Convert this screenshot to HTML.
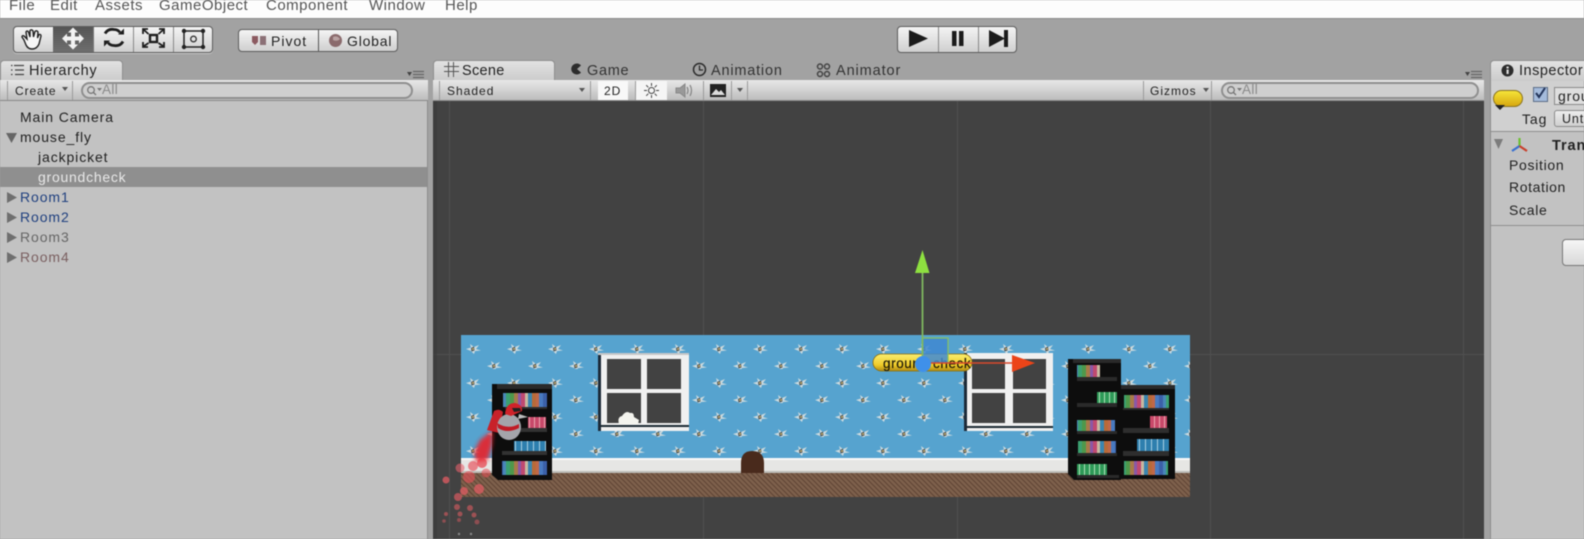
<!DOCTYPE html>
<html style="background:#a2a2a2"><head><meta charset="utf-8"><title>Unity Editor</title>
<style>
html,body{margin:0;padding:0}
html{overflow:hidden}
body{width:1584px;height:539px;overflow:hidden;background:#a2a2a2;position:relative;font-family:"Liberation Sans",sans-serif;color:#222;filter:blur(.45px)}
.a{position:absolute}
.t{position:absolute;white-space:nowrap;font-size:14px;letter-spacing:.9px;line-height:18px}
.m{font-size:15px;letter-spacing:.5px;color:#555;top:-3px}
.btn{position:absolute;background:linear-gradient(#f4f4f4,#cfcfcf);border:1px solid #5c5c5c;box-sizing:border-box}
.bar{position:absolute;background:linear-gradient(#e8e8e8,#bdbdbd);border-bottom:1px solid #8a8a8a;box-sizing:border-box}
.tab{position:absolute;background:linear-gradient(#e2e2e2,#cbcbcb);border-radius:4px 4px 0 0;border:1px solid #8e8e8e;border-bottom:0;box-sizing:border-box}
.search{position:absolute;background:#cfcfcf;border:2px solid #8f8f8f;border-radius:9px;box-sizing:border-box}
.sep{position:absolute;width:1px;background:#9a9a9a}
</style></head><body>

<!-- menu -->
<div class="a" style="left:0;top:0;width:1584px;height:18px;background:#fdfdfd"></div>
<div class="t m" style="left:9px">File</div>
<div class="t m" style="left:50px">Edit</div>
<div class="t m" style="left:95px">Assets</div>
<div class="t m" style="left:159px">GameObject</div>
<div class="t m" style="left:266px">Component</div>
<div class="t m" style="left:369px">Window</div>
<div class="t m" style="left:445px">Help</div>
<div class="a" style="left:0;top:18px;width:1584px;height:1px;background:#8c8c8c"></div>

<!-- tools -->
<div class="btn" style="left:13px;top:26px;width:200px;height:27px;border-radius:4px;box-shadow:0 1px 0 #c8c8c8"></div>
<div class="a" style="left:53px;top:27px;width:40px;height:25px;background:linear-gradient(#555,#6e6e6e)"></div>
<div class="sep" style="left:93px;top:27px;height:25px;background:#777"></div>
<div class="sep" style="left:133px;top:27px;height:25px;background:#888"></div>
<div class="sep" style="left:173px;top:27px;height:25px;background:#888"></div>
<svg class="a" style="left:13px;top:26px" width="200" height="27" viewBox="0 0 200 27">
 <path d="M11 14 L9 11 Q9 9 11 10 L14 13 L13 6 Q14 4 15.500 6 L17 11 L17 4.500 Q18.500 3 20 5 L20.500 11 L22 5.500 Q23.500 4 25 6 L24.500 12 L26 8.500 Q28 8 28 10 L26 18 Q24 23 19 23 Q15 23 13 19 Z" fill="#f6f6f6" stroke="#222" stroke-width="1.400"/>
 <path transform="translate(1,-1.500)" d="M59 3 L64 8 L61 8 L61 12 L65 12 L65 9 L70 14 L65 19 L65 16 L61 16 L61 20 L64 20 L59 25 L54 20 L57 20 L57 16 L53 16 L53 19 L48 14 L53 9 L53 12 L57 12 L57 8 L54 8 Z" fill="#f2f2f2"/>
 <g transform="translate(1,-2.500)">
  <path d="M91 10 Q94 5 100 6 Q104 6 106 9 M109 18 Q106 23 100 22 Q96 22 94 19" fill="none" stroke="#1e1e1e" stroke-width="2.800"/>
  <path d="M104 11 L110 11 L110 5 Z M96 17 L90 17 L90 23 Z" fill="#1e1e1e"/>
 </g>
 <rect x="137" y="9" width="7" height="7" fill="none" stroke="#1e1e1e" stroke-width="2.400"/>
 <path d="M135 3 H130 V8 M146 3 H151 V8 M135 21 H130 V16 M146 21 H151 V16 M131 4 L135.500 8 M150 4 L145.500 8 M131 20 L135.500 17 M150 20 L145.500 17" fill="none" stroke="#1e1e1e" stroke-width="1.800"/>
 <rect x="171" y="5" width="19" height="16" fill="none" stroke="#222" stroke-width="1.500"/>
 <circle cx="171" cy="5" r="2.200" fill="#222"/><circle cx="190" cy="5" r="2.200" fill="#222"/><circle cx="171" cy="21" r="2.200" fill="#222"/><circle cx="190" cy="21" r="2.200" fill="#222"/>
 <circle cx="180.500" cy="13" r="2.800" fill="none" stroke="#333" stroke-width="1.300"/>
</svg>

<!-- pivot / global -->
<div class="btn" style="left:238px;top:29px;width:160px;height:23px;border-radius:4px"></div>
<div class="sep" style="left:318px;top:30px;height:21px;background:#555"></div>
<svg class="a" style="left:250px;top:34px" width="18" height="13"><path d="M2 2 H8 V8 L5 11 L2 8 Z" fill="#8b5a60"/><rect x="10" y="2" width="6" height="9" fill="#8b7076"/></svg>
<div class="t" style="left:271px;top:32px;letter-spacing:1px">Pivot</div>
<svg class="a" style="left:328px;top:33px" width="15" height="15"><circle cx="7.500" cy="7.500" r="6.500" fill="#8a6a6c"/><path d="M5 4 Q9 2 12 6 Q9 9 5 7 Z" fill="#b9a2a2"/></svg>
<div class="t" style="left:347px;top:32px;letter-spacing:.8px">Global</div>

<!-- play -->
<div class="btn" style="left:897px;top:26px;width:120px;height:27px;border-radius:4px"></div>
<div class="sep" style="left:938px;top:27px;height:25px;background:#888"></div>
<div class="sep" style="left:978px;top:27px;height:25px;background:#888"></div>
<svg class="a" style="left:897px;top:26px" width="120" height="27">
 <path d="M12 4 L31 12.500 L12 21 Z" fill="#1b1b1b"/>
 <rect x="55" y="5" width="4.500" height="15" fill="#1b1b1b"/><rect x="62" y="5" width="4.500" height="15" fill="#1b1b1b"/>
 <path d="M92 4 L107 12 L107 4 H111 V21 H107 L107 13 L92 21 Z" fill="#1b1b1b"/>
</svg>

<!-- hierarchy -->
<div class="a" style="left:0;top:80px;width:428px;height:459px;background:#c2c2c2;border-right:1px solid #8d8d8d;box-sizing:border-box"></div>
<div class="tab" style="left:0;top:60px;width:123px;height:21px"></div>
<svg class="a" style="left:10px;top:64px" width="15" height="12"><path d="M1 1.500H2.500M1 6H2.500M1 10.500H2.500M4 1.500H14M5 6H14M5 10.500H14" stroke="#444" stroke-width="1.200"/></svg>
<div class="t" style="left:29px;top:62px;font-size:14.5px;letter-spacing:.7px">Hierarchy</div>
<svg class="a" style="left:407px;top:70px" width="18" height="9"><path d="M0 2H5L2.500 6Z" fill="#444"/><path d="M6 1.500H17M6 4.500H17M6 7.500H17" stroke="#666" stroke-width="1.200"/></svg>
<div class="bar" style="left:0;top:80px;width:428px;height:21px"></div>
<div class="sep" style="left:7px;top:81px;height:19px"></div>
<div class="sep" style="left:72px;top:81px;height:19px"></div>
<div class="t" style="left:15px;top:82px;font-size:12px;letter-spacing:.9px">Create</div>
<svg class="a" style="left:62px;top:87px" width="6" height="4"><path d="M0 0H6L3 4Z" fill="#555"/></svg>
<div class="search" style="left:81px;top:82px;width:332px;height:17px"></div>
<svg class="a" style="left:86px;top:85px" width="16" height="11"><circle cx="5" cy="5" r="3.300" fill="none" stroke="#777" stroke-width="1.300"/><path d="M7 7L10 10" stroke="#777" stroke-width="1.300"/><path d="M11 3H16L13.500 6Z" fill="#777"/></svg>
<div class="t" style="left:102px;top:81px;font-size:13.500px;color:#8a8a8a;letter-spacing:.4px">All</div>

<div class="t" style="left:20px;top:108px">Main Camera</div>
<svg class="a" style="left:6px;top:133px" width="11" height="10"><path d="M0 0H11L5.500 10Z" fill="#666"/></svg>
<div class="t" style="left:20px;top:128px">mouse_fly</div>
<div class="t" style="left:38px;top:148px">jackpicket</div>
<div class="a" style="left:0;top:167px;width:427px;height:20px;background:#8f8f8f"></div>
<div class="t" style="left:38px;top:168px;color:#e8e8e8;letter-spacing:.75px">groundcheck</div>
<svg class="a" style="left:7px;top:192px" width="10" height="72"><path d="M0 0L10 5.500L0 11ZM0 20L10 25.500L0 31ZM0 40L10 45.500L0 51ZM0 60L10 65.500L0 71Z" fill="#6e6e6e"/></svg>
<div class="t" style="left:20px;top:188px;color:#20407f">Room1</div>
<div class="t" style="left:20px;top:208px;color:#20407f">Room2</div>
<div class="t" style="left:20px;top:228px;color:#666">Room3</div>
<div class="t" style="left:20px;top:248px;color:#7a5f60">Room4</div>

<!-- scene panel -->
<div class="tab" style="left:433px;top:60px;width:122px;height:21px"></div>
<svg class="a" style="left:444px;top:62px" width="15" height="15"><path d="M4.500 0V15M9.500 0V15M0 4.500H15M0 9.500H15" stroke="#555" stroke-width="1"/></svg>
<div class="t" style="left:462px;top:62px;font-size:14.500px;letter-spacing:.3px">Scene</div>
<svg class="a" style="left:570px;top:63px" width="12" height="12"><path d="M11 2.500A5.500 5.500 0 1 0 11 9.500L7 6Z" fill="#2c2c2c"/></svg>
<div class="t" style="left:587px;top:62px;font-size:14.500px;color:#333;letter-spacing:.7px">Game</div>
<svg class="a" style="left:692px;top:62px" width="15" height="15"><circle cx="7.500" cy="7.500" r="6" fill="none" stroke="#2c2c2c" stroke-width="1.500"/><path d="M7.500 3.500V8H11" fill="none" stroke="#2c2c2c" stroke-width="1.300"/></svg>
<div class="t" style="left:711px;top:62px;font-size:14.500px;color:#333;letter-spacing:.8px">Animation</div>
<svg class="a" style="left:816px;top:63px" width="15" height="15"><g fill="none" stroke="#444" stroke-width="1.500"><circle cx="4" cy="3.500" r="2.500"/><circle cx="11" cy="3.500" r="2.500"/><circle cx="11" cy="11" r="2.500"/><circle cx="4" cy="11" r="2.500"/></g></svg>
<div class="t" style="left:836px;top:62px;font-size:14.500px;color:#333;letter-spacing:.9px">Animator</div>
<svg class="a" style="left:1465px;top:70px" width="18" height="9"><path d="M0 2H5L2.500 6Z" fill="#444"/><path d="M6 1.500H17M6 4.500H17M6 7.500H17" stroke="#666" stroke-width="1.200"/></svg>

<div class="bar" style="left:433px;top:80px;width:1051px;height:21px"></div>
<div class="sep" style="left:439px;top:81px;height:19px"></div>
<div class="t" style="left:447px;top:82px;font-size:12px;letter-spacing:1px">Shaded</div>
<svg class="a" style="left:579px;top:88px" width="6" height="4"><path d="M0 0H6L3 4Z" fill="#555"/></svg>
<div class="sep" style="left:590px;top:81px;height:19px"></div>
<div class="a" style="left:598px;top:81px;width:30px;height:19px;background:#f8f8f8"></div>
<div class="t" style="left:604px;top:82px;font-size:12px;letter-spacing:1px">2D</div>
<div class="sep" style="left:635px;top:81px;height:19px"></div>
<div class="a" style="left:636px;top:81px;width:31px;height:19px;background:#f5f5f5"></div>
<svg class="a" style="left:644px;top:83px" width="15" height="15"><circle cx="7.500" cy="7.500" r="3" fill="none" stroke="#444"/><path d="M7.500 0V3M7.500 12V15M0 7.500H3M12 7.500H15M2.200 2.200L4.300 4.300M10.700 10.700L12.800 12.800M2.200 12.800L4.300 10.700M10.700 4.300L12.800 2.200" stroke="#444"/></svg>
<svg class="a" style="left:675px;top:83px" width="20" height="15"><path d="M1 5H5L10 1V14L5 10H1Z" fill="#999" stroke="#888"/><path d="M12 4Q14 7.500 12 11M15 2Q18 7.500 15 13" fill="none" stroke="#888" stroke-width="1.300"/></svg>
<div class="sep" style="left:703px;top:81px;height:19px"></div>
<svg class="a" style="left:710px;top:84px" width="16" height="13"><rect width="16" height="13" fill="#222"/><path d="M1 11L6 5L9 8L11 6L15 11Z" fill="#ddd"/></svg>
<svg class="a" style="left:737px;top:88px" width="6" height="4"><path d="M0 0H6L3 4Z" fill="#555"/></svg>
<div class="sep" style="left:731px;top:81px;height:19px"></div>
<div class="sep" style="left:747px;top:81px;height:19px"></div>
<div class="sep" style="left:1143px;top:81px;height:19px"></div>
<div class="t" style="left:1150px;top:82px;font-size:12px;letter-spacing:1px">Gizmos</div>
<svg class="a" style="left:1203px;top:88px" width="6" height="4"><path d="M0 0H6L3 4Z" fill="#555"/></svg>
<div class="sep" style="left:1211px;top:81px;height:19px"></div>
<div class="search" style="left:1221px;top:82px;width:258px;height:17px"></div>
<svg class="a" style="left:1226px;top:85px" width="16" height="11"><circle cx="5" cy="5" r="3.300" fill="none" stroke="#777" stroke-width="1.300"/><path d="M7 7L10 10" stroke="#777" stroke-width="1.300"/><path d="M11 3H16L13.500 6Z" fill="#777"/></svg>
<div class="t" style="left:1242px;top:81px;font-size:13.500px;color:#8a8a8a;letter-spacing:.4px">All</div>

<!-- scene view -->
<svg class="a" style="left:0;top:0" width="1584" height="539" viewBox="0 0 1584 539">
 <defs>
  <g id="fl"><path d="M-7 0 L-2 -1.500 L-3 -5 L1 -2 L6 -4 L3 0 L8 1.500 L2 2 L1 5 L-2 2 Z" fill="#dfe4e2" opacity=".85"/><path d="M-2 -1 L1 -2.500 L1.500 1.500 L-1.500 2.500Z" fill="#2e3a44" opacity=".85"/><circle cx="0" cy="0" r="1" fill="#c8a860"/></g>
  <pattern id="wall" x="461" y="335" width="82" height="34" patternUnits="userSpaceOnUse">
   <use href="#fl" x="12" y="14"/><use href="#fl" x="53" y="14"/>
   <use href="#fl" x="33" y="31"/><use href="#fl" x="74" y="31"/>
  </pattern>
  <pattern id="floor" x="461" y="473" width="5" height="5" patternUnits="userSpaceOnUse">
   <rect width="5" height="5" fill="#7d5f4c"/><path d="M0 0L5 5M-2 3L2 7M3 -2L7 2" stroke="#5a4030" stroke-width=".8"/>
  </pattern>
  <pattern id="books" width="44" height="13" patternUnits="userSpaceOnUse">
   <rect width="4" height="13" fill="#3a86b0"/><rect x="4" width="4" height="13" fill="#b86a38"/><rect x="8" width="3" height="13" fill="#c06848"/><rect x="11" width="4" height="13" fill="#4a7ac0"/><rect x="15" width="4" height="13" fill="#3a60a8"/><rect x="19" width="3" height="13" fill="#4a86b8"/><rect x="22" width="4" height="13" fill="#3aa070"/><rect x="26" width="4" height="13" fill="#50984c"/><rect x="30" width="4" height="13" fill="#a87a48"/><rect x="34" width="3" height="13" fill="#8a58a8"/><rect x="37" width="4" height="13" fill="#c04870"/><rect x="41" width="3" height="13" fill="#c8b8a0"/>
  </pattern>
  <pattern id="blues" width="6" height="13" patternUnits="userSpaceOnUse"><rect width="5" height="13" fill="#2f7fae"/><rect x="5" width="1" height="13" fill="#a8d0e4"/></pattern>
  <pattern id="pinks" width="5" height="13" patternUnits="userSpaceOnUse"><rect width="4" height="13" fill="#c8486a"/><rect x="4" width="1" height="13" fill="#e8a8b0"/></pattern>
  <pattern id="greens" width="5" height="13" patternUnits="userSpaceOnUse"><rect width="4" height="13" fill="#2e9a58"/><rect x="4" width="1" height="13" fill="#b0e0b8"/></pattern>
  <filter id="soft" x="-5%" y="-5%" width="110%" height="110%"><feGaussianBlur stdDeviation="0.3"/></filter>
  <filter id="fb" x="-30%" y="-30%" width="160%" height="160%"><feGaussianBlur stdDeviation="2"/></filter>
  <linearGradient id="pill" x1="0" y1="0" x2="0" y2="1"><stop offset="0" stop-color="#fbee70"/><stop offset=".65" stop-color="#efcb28"/><stop offset="1" stop-color="#b08a14"/></linearGradient>
 </defs>

 <rect x="433" y="101" width="1051" height="438" fill="#424242"/>
 <path d="M449.500 101V539M703.500 101V539M957.500 101V539M1210.500 101V539M1463.500 101V539M433 354.500H1484" stroke="#505050" stroke-width="1"/>
 <rect x="433" y="101" width="4" height="438" fill="#3a3a3a" opacity=".6"/>

 <g filter="url(#soft)">
  <rect x="461" y="335" width="729" height="125" fill="#57a3cf"/>
  <rect x="461" y="335" width="729" height="125" fill="url(#wall)"/>
  <rect x="461" y="458" width="729" height="3" fill="#f8f8f8"/>
  <rect x="461" y="460" width="729" height="13" fill="#e6e6e4"/>
  <rect x="461" y="471" width="729" height="2" fill="#bdbdb8"/>
  <rect x="461" y="473" width="729" height="24" fill="url(#floor)"/>

  <!-- window 1 -->
  <rect x="598" y="353" width="91" height="78" fill="#f0f0f0"/>
  <rect x="598" y="353" width="3" height="78" fill="#1a2a38"/>
  <rect x="598" y="353" width="91" height="2" fill="#c8c8c8"/>
  <rect x="601" y="425" width="88" height="2" fill="#1f2a30"/>
  <rect x="607" y="359" width="34" height="30" fill="#434343"/><rect x="647" y="359" width="34" height="30" fill="#434343"/>
  <rect x="607" y="393" width="34" height="30" fill="#434343"/><rect x="647" y="393" width="34" height="30" fill="#434343"/>
  <path d="M619 424Q617 417 622 416Q626 410 630 413Q634 412 634 417L639 420L638 424Z" fill="#f4f4ee"/>

  <!-- window 2 -->
  <rect x="964" y="353" width="89" height="78" fill="#f0f0f0"/>
  <rect x="964" y="353" width="3" height="78" fill="#1a2a38"/>
  <rect x="967" y="426" width="86" height="2" fill="#1f2a30"/>
  <rect x="972" y="359" width="33" height="30" fill="#434343"/><rect x="1013" y="359" width="33" height="30" fill="#434343"/>
  <rect x="972" y="393" width="33" height="30" fill="#434343"/><rect x="1013" y="393" width="33" height="30" fill="#434343"/>

  <!-- mouse hole -->
  <path d="M741 473V463Q741 451 752 451Q764 451 764 463V473Z" fill="#4a2a1c"/>

  <!-- shelf 1 -->
  <path d="M492 384H552V480H498L492 475Z" fill="#0e0e0e"/>
  <rect x="497" y="384" width="55" height="5" fill="#2c2c2c"/>
  <rect x="503" y="393" width="44" height="14" fill="url(#books)"/>
  <rect x="528" y="417" width="18" height="13" fill="url(#pinks)"/>
  <rect x="514" y="441" width="32" height="13" fill="url(#blues)"/>
  <rect x="502" y="461" width="45" height="14" fill="url(#books)"/>
  <rect x="505" y="407" width="42" height="2" fill="#2f2f2f"/><rect x="520" y="428" width="27" height="4" fill="#333"/><rect x="502" y="451" width="45" height="4" fill="#333"/>

  <!-- shelf 2 -->
  <path d="M1068 359H1121V480H1074L1068 474Z" fill="#0e0e0e"/>
  <rect x="1073" y="359" width="48" height="4" fill="#2c2c2c"/>
  <rect x="1077" y="365" width="23" height="13" fill="url(#books)"/>
  <rect x="1097" y="392" width="20" height="13" fill="url(#greens)"/>
  <rect x="1077" y="420" width="38" height="12" fill="url(#books)"/>
  <rect x="1078" y="441" width="38" height="13" fill="url(#books)"/>
  <rect x="1077" y="464" width="30" height="13" fill="url(#greens)"/>
  <rect x="1077" y="377" width="40" height="4" fill="#2a2a2a"/><rect x="1077" y="403" width="40" height="4" fill="#2a2a2a"/><rect x="1077" y="431" width="40" height="3" fill="#2a2a2a"/><rect x="1077" y="453" width="40" height="3" fill="#2a2a2a"/><rect x="1077" y="475" width="42" height="3" fill="#2a2a2a"/>

  <!-- shelf 3 -->
  <rect x="1121" y="385" width="54" height="94" fill="#0e0e0e"/>
  <rect x="1121" y="385" width="54" height="4" fill="#2c2c2c"/>
  <rect x="1124" y="395" width="45" height="13" fill="url(#books)"/>
  <rect x="1150" y="416" width="17" height="13" fill="url(#pinks)"/>
  <rect x="1137" y="439" width="32" height="13" fill="url(#blues)"/>
  <rect x="1124" y="461" width="44" height="14" fill="url(#books)"/>
  <rect x="1123" y="408" width="46" height="2" fill="#2a2a2a"/><rect x="1123" y="428" width="46" height="5" fill="#2f2f2f"/><rect x="1123" y="451" width="46" height="5" fill="#2f2f2f"/>

  <!-- particles -->
  <g fill="#d85a60">
   <circle cx="446" cy="480" r="3.500" opacity=".8"/><circle cx="458" cy="497" r="4" opacity=".7"/><circle cx="464" cy="491" r="4" opacity=".8"/><circle cx="479" cy="489" r="5" opacity=".8"/><circle cx="457" cy="507" r="3" opacity=".6"/><circle cx="470" cy="508" r="3" opacity=".6"/><circle cx="460" cy="514" r="2.500" opacity=".6"/><circle cx="474" cy="515" r="2.500" opacity=".6"/><circle cx="446" cy="514" r="2" opacity=".6"/><circle cx="459" cy="520" r="2" opacity=".5"/><circle cx="477" cy="522" r="2.500" opacity=".5"/><circle cx="444" cy="521" r="1.800" opacity=".5"/>
  </g>
  <circle cx="459" cy="534" r="1.200" fill="#888"/><circle cx="471" cy="534" r="1.200" fill="#888"/>
 </g>
 <!-- flame -->
 <path d="M493 430L480 440L474 452L476 462L488 460L492 445Z" fill="#e8202c" opacity=".9" filter="url(#fb)"/>
 <circle cx="473" cy="466" r="5" fill="#e8404c" opacity=".6"/><circle cx="482" cy="463" r="5" fill="#e8303c" opacity=".65"/><circle cx="460" cy="468" r="4.500" fill="#e8606c" opacity=".6"/><circle cx="469" cy="477" r="6" fill="#e85058" opacity=".6"/><circle cx="486" cy="473" r="4.500" fill="#e85058" opacity=".55"/>
 <g filter="url(#soft)">
  <!-- mouse -->
  <path d="M487 430L494 411Q499 408 503 412L499 433Z" fill="#c8202c"/>
  <ellipse cx="509" cy="427" rx="12" ry="13" fill="#a4a4aa"/>
  <path d="M497 423Q508 430 519 424L519 428Q507 434 498 428Z" fill="#c01c28"/>
  <path d="M505 414Q506 403 515 403Q523 405 522 411L511 416Z" fill="#d0202c"/>
  <path d="M512 408H520L521 411L514 412Z" fill="#222"/>
  <path d="M519 414L528 417L518 419Z" fill="#bdbdbd"/>

  <!-- pill -->
  <rect x="873" y="354" width="99" height="17" rx="8.500" fill="url(#pill)" stroke="#8a6c10" stroke-width=".8"/>
 </g>
 <text x="883" y="368" font-family="Liberation Sans,sans-serif" font-size="13.500" letter-spacing=".6" stroke="#1e1a08" stroke-width=".2" fill="#1e1a08">ground check</text>

 <!-- gizmo -->
 <rect x="922" y="338" width="26" height="25" fill="#3f88d0" opacity=".85"/>
 <path d="M922 338H948V363" fill="none" stroke="#88c060" stroke-width="1.200"/>
 <path d="M922 363H948" stroke="#e8e8e8" stroke-width="1"/>
 <path d="M922.500 272V362" stroke="#80b860" stroke-width="1.800"/>
 <path d="M922.500 250L929.500 273H915Z" fill="#8ee040"/>
 <path d="M923 363H1013" stroke="#d8482c" stroke-width="1.500"/>
 <path d="M1035 363L1012 355V372Z" fill="#ec4418"/>
 <circle cx="923" cy="364" r="8" fill="#3f90ea"/>
</svg>

<!-- inspector -->
<div class="a" style="left:1490px;top:80px;width:94px;height:459px;background:#c2c2c2;border-left:1px solid #8d8d8d;box-sizing:border-box"></div>
<div class="tab" style="left:1490px;top:60px;width:110px;height:21px"></div>
<svg class="a" style="left:1501px;top:64px" width="13" height="13"><circle cx="6.500" cy="6.500" r="6" fill="#2c2c2c"/><rect x="5.500" y="5.500" width="2.200" height="4.500" fill="#ddd"/><rect x="5.500" y="2.500" width="2.200" height="2" fill="#ddd"/></svg>
<div class="t" style="left:1519px;top:62px;font-size:14.500px;letter-spacing:.5px">Inspector</div>
<div class="a" style="left:1491px;top:81px;width:93px;height:51px;background:#d0d0d0;border-bottom:1px solid #8f8f8f;box-sizing:border-box"></div>
<div class="a" style="left:1493px;top:90px;width:30px;height:17px;border-radius:9px;background:linear-gradient(#f6e438,#d8a810);border:1px solid #8a7420;box-sizing:border-box"></div>
<svg class="a" style="left:1495px;top:105px" width="10" height="5"><path d="M0 0H10L5 5Z" fill="#222"/></svg>
<div class="a" style="left:1533px;top:87px;width:15px;height:15px;background:#a4bbdc;border:1px solid #5c6e88;box-sizing:border-box"></div>
<svg class="a" style="left:1534px;top:87px" width="13" height="13"><path d="M2 6L5 10L11 1" fill="none" stroke="#22345a" stroke-width="2"/></svg>
<div class="a" style="left:1554px;top:87px;width:40px;height:18px;background:#dedede;border:1px solid #8a8a8a;box-sizing:border-box"></div>
<div class="t" style="left:1558px;top:87px">grou</div>
<div class="t" style="left:1522px;top:110px">Tag</div>
<div class="a" style="left:1554px;top:110px;width:40px;height:17px;background:linear-gradient(#eee,#cfcfcf);border:1px solid #8a8a8a;border-radius:3px;box-sizing:border-box"></div>
<div class="t" style="left:1562px;top:110px;font-size:12.500px">Unt</div>
<svg class="a" style="left:1494px;top:139px" width="9" height="11"><path d="M0 0H9L4.500 10Z" fill="#7c7c7c"/></svg>
<svg class="a" style="left:1510px;top:137px" width="19" height="16"><path d="M9.500 9V1" stroke="#6cc030" stroke-width="2.200"/><path d="M9.500 9L2 14" stroke="#3a70d0" stroke-width="2.200"/><path d="M9.500 9L17 14" stroke="#c8402c" stroke-width="2.200"/></svg>
<div class="t" style="left:1552px;top:137px;font-weight:bold;font-size:14.500px">Tran</div>
<div class="t" style="left:1509px;top:156px;letter-spacing:.7px">Position</div>
<div class="t" style="left:1509px;top:178px;letter-spacing:.6px">Rotation</div>
<div class="t" style="left:1509px;top:201px;letter-spacing:.7px">Scale</div>
<div class="a" style="left:1491px;top:225px;width:93px;height:1px;background:#8f8f8f"></div>
<div class="a" style="left:1562px;top:239px;width:40px;height:27px;background:linear-gradient(#f6f6f6,#d8d8d8);border:1px solid #777;border-radius:4px;box-sizing:border-box"></div>
</body></html>
